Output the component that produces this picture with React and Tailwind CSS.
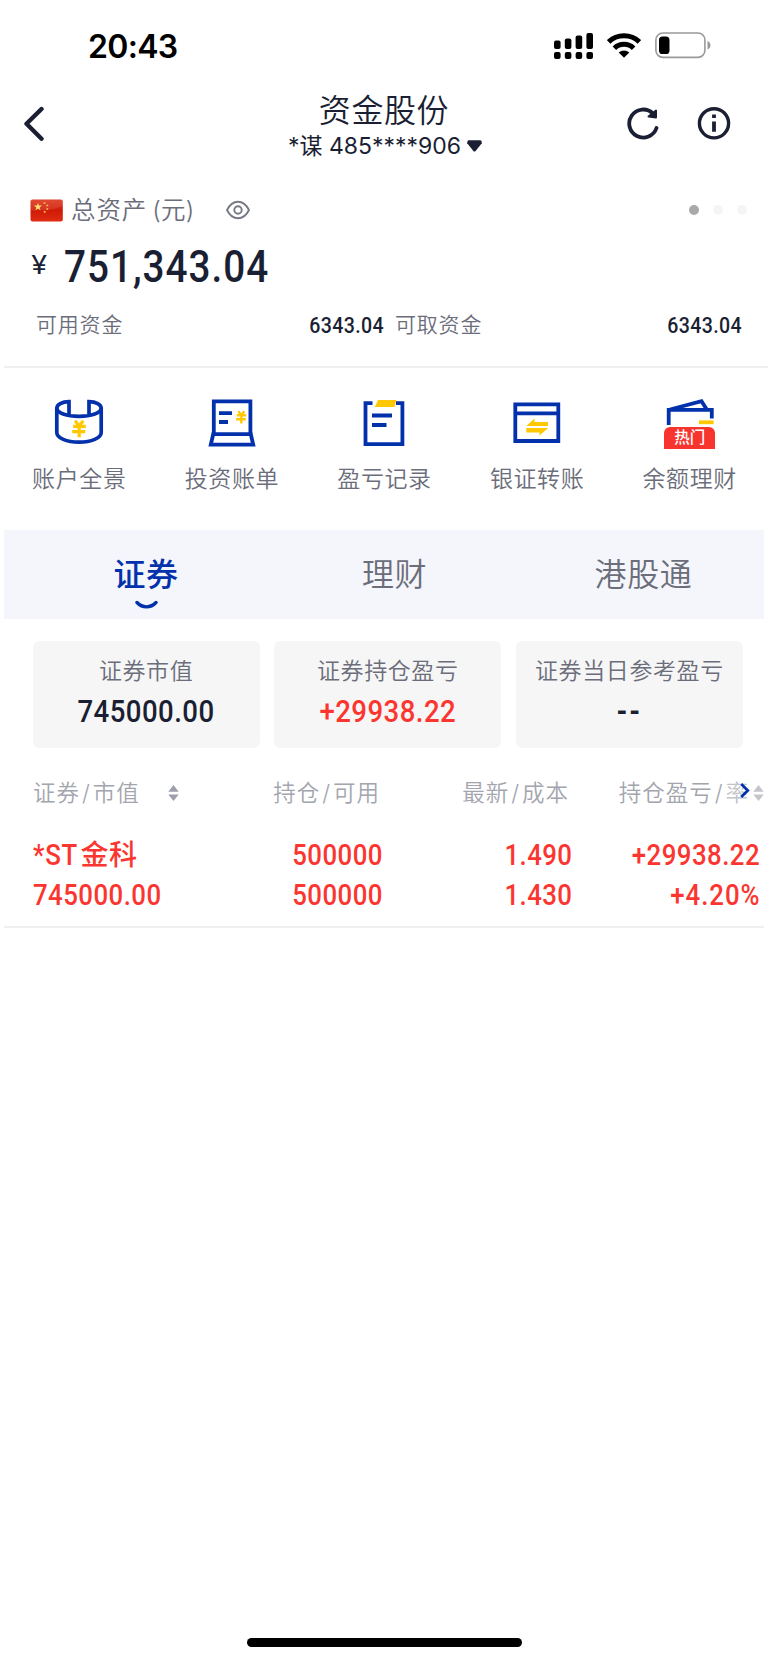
import React from 'react';

const BLUE = '#0331ac';
const YELLOW = '#ffc803';
const INK = '#1b1f33';

const YuanMark = ({ x, y, scale = 1 }) => (
    <g transform={`translate(${x} ${y}) scale(${scale})`} stroke={YELLOW} strokeWidth="3.2" fill="none">
        <path d="M3.2 .2L7 5.6L11.3 .2M1.2 5.8H13.8M.2 11.2H13.2M7.2 5V16.8" />
    </g>
);

const PanoramaIcon = () => (
    <svg width="50" height="50" viewBox="0 0 50 50" fill="none" stroke={BLUE} strokeWidth="3.7">
        <path d="M15 16.3V3.6C8 3.6 2.8 6.5 2.8 10.3C2.8 14.8 12.5 18.3 25 18.3C37.5 18.3 47.2 14.8 47.2 10.3C47.2 6.5 42 3.6 35 3.6V16.3" />
        <path d="M2.8 10V34.5C2.8 40 12.5 44.2 25 44.2C37.5 44.2 47.2 40 47.2 34.5V10" />
        <YuanMark x={18} y={22.5} />
    </svg>
);

const BillIcon = () => (
    <svg width="50" height="50" viewBox="0 0 50 50" fill="none" stroke={BLUE} strokeWidth="3.8">
        <path d="M6.8 36V3.4H43.4V36" />
        <path d="M6.2 36.2H43.8L46.2 46.6H3.8Z" />
        <path d="M12 15.2H25M12 24H21" />
        <YuanMark x={29} y={13} scale={0.74} />
    </svg>
);

const RecordIcon = () => (
    <svg width="50" height="50" viewBox="0 0 50 50" fill="none" stroke={BLUE} strokeWidth="3.8">
        <path d="M13.5 5.2H6.5V46.2H43.4V5.2H37" />
        <path d="M13 17.5H33M13 27H27.5" />
        <path d="M19 2H37.5L35.3 9H15.8Z" fill={YELLOW} stroke="none" />
    </svg>
);

const TransferIcon = () => (
    <svg width="50" height="50" viewBox="0 0 50 50" fill="none" stroke={BLUE} strokeWidth="3.8">
        <path d="M3.3 6.3H46.3V43H3.3ZM3.3 15.3H46.3" />
        <path d="M14.3 28L22.5 20.5V24H36V28ZM14.3 30H36.3L27.5 37.5V34.5H14.3Z" fill={YELLOW} stroke="none" />
    </svg>
);

const WalletIcon = () => (
    <svg width="50" height="50" viewBox="0 0 50 50" fill="none" stroke={BLUE} strokeWidth="3.8">
        <path d="M3.7 27V11.9H46.8V20.5" />
        <path d="M5 11.5L36.5 3.2L41.8 11.5" />
        <path d="M34 24.3H48.6" stroke={YELLOW} />
    </svg>
);

const SortIcon = ({ className = '' }) => (
    <svg className={className} width="11" height="16" viewBox="0 0 11 16" fill="#9d9faa">
        <path d="M5.5 0L10.7 6.7H.3ZM5.5 16L10.7 9.6H.3Z" />
    </svg>
);

const shortcuts = [
    { label: '账户全景', Icon: PanoramaIcon },
    { label: '投资账单', Icon: BillIcon },
    { label: '盈亏记录', Icon: RecordIcon },
    { label: '银证转账', Icon: TransferIcon },
    { label: '余额理财', Icon: WalletIcon, badge: '热门' },
];

const summary = [
    { label: '证券市值', value: '745000.00', color: 'text-[#1b1f33]' },
    { label: '证券持仓盈亏', value: '+29938.22', color: 'text-[#fb3630]' },
    { label: '证券当日参考盈亏', value: <span className="font-bold tracking-[2px]">--</span>, color: 'text-[#1b1f33]' },
];

// Roboto squeezed a little so that figures keep a narrow look
const Num = ({ children, className = '' }) => (
    <span className={`inline-block font-['Roboto'] font-medium whitespace-nowrap scale-x-[0.89] ${className}`}>{children}</span>
);

const StatusBar = () => (
    <div className="flex h-[90px] items-start justify-between pl-[88px] pr-14 text-black">
        <span className="mt-[27px] font-['Inter'] text-[32px] leading-10 font-semibold tracking-[-0.7px]">20:43</span>
        <div className="mt-[33px] flex">
            <svg width="39" height="28" viewBox="0 0 39 28" fill="#000">
                <rect x="0" y="7.5" width="6.6" height="8.5" rx="2" />
                <rect x="10.8" y="5.5" width="6.6" height="10.5" rx="2" />
                <rect x="21.6" y="2.5" width="6.6" height="13.5" rx="2" />
                <rect x="32.4" y="0" width="6.6" height="16" rx="2" />
                <rect x="0" y="19" width="6.6" height="7" rx="2" />
                <rect x="10.8" y="19" width="6.6" height="7" rx="2" />
                <rect x="21.6" y="19" width="6.6" height="7" rx="2" />
                <rect x="32.4" y="19" width="6.6" height="7" rx="2" />
            </svg>
            <svg className="ml-3.5" width="34" height="26" viewBox="0 0 34 26" fill="none" stroke="#000" strokeWidth="5">
                <path d="M1.6 9C10 .8 24 .8 32.4 9" />
                <path d="M7.4 15.2C12.6 10 21.4 10 26.6 15.2" />
                <path d="M17 24.8L11.7 19.6C14.7 16.7 19.3 16.7 22.3 19.6Z" fill="#000" stroke="none" />
            </svg>
            <svg className="-mt-px ml-3.5" width="57" height="27" viewBox="0 0 57 27" fill="none">
                <rect x=".9" y="1" width="49" height="24.4" rx="7" stroke="#999" strokeWidth="1.6" />
                <rect x="4" y="4.5" width="10.5" height="17.5" rx="3.6" fill="#000" />
                <path d="M52.5 9C56.5 10.5 56.5 16 52.5 17.5Z" fill="#999" />
            </svg>
        </div>
    </div>
);

const Header = () => (
    <div className="flex h-[90px] items-start justify-between pl-6 pr-[37px] text-[#1b1f33]">
        <svg className="mt-4" width="22" height="36" viewBox="0 0 22 36" fill="none" stroke={INK} strokeWidth="4.4" strokeLinecap="round" strokeLinejoin="round">
            <path d="M17.5 3L2.5 17.8L17.5 32.7" />
        </svg>
        <div className="ml-[97px] flex flex-col items-center pt-0.5">
            <h1 className="-ml-0.5 h-[37px] text-[32px] leading-[38px] font-[350] tracking-[0.6px]">资金股份</h1>
            <div className="flex h-8 items-center pt-0.5 text-[23px] leading-8 font-[380]">
                <span>*谋 485****906</span>
                <svg className="ml-1.5" width="15" height="12" viewBox="0 0 15 12" fill={INK}>
                    <path d="M1.5 .3H13.5Q15 .6 14.8 3.2L8.6 11Q7.5 12 6.4 11L.2 3.2Q0 .6 1.5 .3Z" />
                </svg>
            </div>
        </div>
        <div className="mt-4 flex gap-[38px]">
            <svg width="32" height="34" viewBox="0 0 32 34" fill="none" stroke={INK} strokeWidth="3.8" strokeLinecap="round">
                <path d="M29.5 22A14 14 0 1 1 26 7.5" />
                <path d="M29 4.5V11.5L21.5 10.5Z" fill={INK} strokeWidth="2" strokeLinejoin="round" />
            </svg>
            <svg width="34" height="34" viewBox="0 0 34 34" fill="none" stroke={INK} strokeWidth="3.4">
                <circle cx="17" cy="17.3" r="14.6" />
                <path d="M17 8.5V12M17 15.5V25.8" strokeWidth="3.8" />
            </svg>
        </div>
    </div>
);

const Assets = () => (
    <section className="h-[186px] pl-[30px] pr-[26px] text-[#1b1f33]">
        <div className="flex h-[60px] items-center">
            <svg width="33" height="23" viewBox="0 0 33 23">
                <defs>
                    <linearGradient id="flag" x1="0" y1="0" x2="0" y2="1">
                        <stop offset="0" stopColor="#dc351b" />
                        <stop offset=".5" stopColor="#cf1b08" />
                        <stop offset="1" stopColor="#df2c12" />
                    </linearGradient>
                </defs>
                <rect x=".5" y=".5" width="32.3" height="22" rx="2" fill="url(#flag)" />
                <path d="M.5 11.5C12 11.5 25 11 32.8 7V2.5Q32.8.5 30.8.5H2.5Q.5.5.5 2.5Z" fill="#fff" opacity=".1" />
                <path d="M8 3.8L9 6.6H12L9.6 8.4L10.5 11.2L8 9.5L5.5 11.2L6.4 8.4L4 6.6H7Z" fill="#ffe070" />
                <g fill="#f5b04a">
                    <circle cx="14.5" cy="4" r="1.1" />
                    <circle cx="17.3" cy="6.5" r="1.1" />
                    <circle cx="17.3" cy="10" r="1.1" />
                    <circle cx="14.7" cy="12.8" r="1.1" />
                </g>
            </svg>
            <span className="ml-2 text-[24.5px] font-[350] tracking-[0.9px] text-[#6b6d7a]">总资产<span className="ml-[5px] tracking-[0.2px]">(元)</span></span>
            <svg className="ml-8" width="24" height="20" viewBox="0 0 24 20" fill="none" stroke="#777985" strokeWidth="1.9">
                <path d="M1 10C4 4 8 1.7 12 1.7S20 4 23 10C20 16 16 18.3 12 18.3S4 16 1 10Z" />
                <circle cx="12" cy="10" r="3.7" />
            </svg>
            <div className="-mr-[5px] ml-auto flex items-center gap-3.5">
                <i className="size-2.5 rounded-full bg-[#a9a9a9]" />
                <i className="size-2.5 rounded-full bg-[#f5f5f5]" />
                <i className="size-2.5 rounded-full bg-[#f5f5f5]" />
            </div>
        </div>
        <div className="flex h-[51px] items-center pt-1">
            <span className="-mt-1 w-[34px] origin-left scale-x-115 pl-px font-['Inter'] text-[25px]">¥</span>
            <Num className="origin-left text-[43.5px] leading-[51px] tracking-[1.1px]">751,343.04</Num>
        </div>
        <div className="flex h-[68px] items-center text-[21px] font-[350] text-[#6b6d7a]">
            <div className="flex w-[354px] items-center justify-between pl-1.5">
                <span className="tracking-[0.8px]">可用资金</span>
                <Num className="origin-right text-[22px] tracking-[0.4px] text-[#1b1f33]">6343.04</Num>
            </div>
            <div className="flex flex-1 items-center justify-between pl-[11px]">
                <span className="tracking-[0.8px]">可取资金</span>
                <Num className="origin-right text-[22px] tracking-[0.4px] text-[#1b1f33]">6343.04</Num>
            </div>
        </div>
    </section>
);

const Shortcuts = () => (
    <nav className="ml-1 flex h-[164px] border-t-2 border-[#efefef] pr-px pt-[30px]">
        {shortcuts.map(({ label, Icon, badge }) => (
            <div key={label} className="relative -left-px flex flex-1 flex-col items-center">
                <Icon />
                {badge && (
                    <span className="absolute top-[28.5px] flex h-[22px] w-[51px] items-center justify-center rounded-t-md bg-[#f8342f] text-[15.5px] font-medium text-white">{badge}</span>
                )}
                <span className="mt-3.5 text-[23px] leading-[34px] font-[350] tracking-[0.6px] text-[#6b6d7a]">{label}</span>
            </div>
        ))}
    </nav>
);

const Tabs = () => (
    <div className="mx-1 flex h-[89px] bg-[#f4f6fb] pl-[18px] text-[32px] leading-[89px] font-[350] tracking-[0.6px] text-[#6b6d7a]">
        <div className="relative w-[248px] text-center font-medium text-[#0331ac]">
            证券
            <svg className="absolute top-[70px] left-[113px]" width="23" height="10" viewBox="0 0 23 10" fill="none" stroke={BLUE} strokeWidth="3.4" strokeLinecap="round">
                <path d="M2 2.5C7.5 8.3 15.5 8.3 21 2.5" />
            </svg>
        </div>
        <div className="w-[249px] text-center">理财</div>
        <div className="flex-1 pl-1 text-center">港股通</div>
    </div>
);

const Summary = () => (
    <div className="mt-[22px] flex gap-[14.5px] pl-[32.5px] pr-[25px]">
        {summary.map((item) => (
            <div key={item.label} className="flex h-[107px] flex-1 flex-col items-center rounded-md bg-[#f6f6f6] pt-[13px]">
                <span className="text-[23px] leading-[34px] font-[350] tracking-[0.6px] whitespace-nowrap text-[#6b6d7a]">{item.label}</span>
                <Num className={`mt-1 text-[31px] leading-10 tracking-[0.5px] ${item.color}`}>{item.value}</Num>
            </div>
        ))}
    </div>
);

const Holdings = () => (
    <div className="mx-1 mt-[25px] h-[155px] border-b-2 border-[#efefef]">
        <div className="flex h-10 items-center text-[22.5px] font-[350] tracking-[1px] text-[#a3a5ae]">
            <div className="flex w-[180px] items-center pl-[29px]">
                证券<span className="px-0.5">/</span>市值
                <SortIcon className="ml-7 shrink-0" />
            </div>
            <div className="w-[196px] text-right">持仓<span className="px-0.5">/</span>可用</div>
            <div className="w-[189px] text-right">最新<span className="px-0.5">/</span>成本</div>
            <div className="relative flex flex-1 items-center justify-end">
                <span className="whitespace-nowrap">持仓盈亏<span className="px-0.5">/</span>率</span>
                <SortIcon className="ml-1 shrink-0 opacity-60" />
                <div className="absolute top-0 right-3 flex h-8 w-[27px] items-center justify-end bg-white/35 pb-1 pr-0.5">
                    <svg width="10" height="15" viewBox="0 0 10 15" fill="none" stroke={BLUE} strokeWidth="2.7">
                        <path d="M1.2 1L7.8 7.5L1.2 14" />
                    </svg>
                </div>
            </div>
        </div>
        <div className="mt-[22px] flex text-[29px] leading-[40px] tracking-[0.5px] text-[#fb3630]">
            <div className="flex w-[190px] flex-col items-start pl-[29px]">
                <div className="flex h-10 items-center whitespace-nowrap">
                    <Num className="-mr-[3px] origin-left tracking-[0.8px]">*ST</Num>
                    <span className="text-[28px] font-medium tracking-[0.5px]">金科</span>
                </div>
                <Num className="origin-left">745000.00</Num>
            </div>
            <div className="flex w-[189px] flex-col items-end">
                <Num className="origin-right">500000</Num>
                <Num className="origin-right">500000</Num>
            </div>
            <div className="flex w-[189px] flex-col items-end">
                <Num className="origin-right">1.490</Num>
                <Num className="origin-right">1.430</Num>
            </div>
            <div className="flex flex-1 flex-col items-end pr-[3.5px]">
                <Num className="origin-right">+29938.22</Num>
                <Num className="origin-right tracking-[1.1px]">+4.20%</Num>
            </div>
        </div>
    </div>
);

const App = () => {
    return (
        <div className="flex h-[1662px] w-[768px] flex-col overflow-hidden bg-white font-['Inter','Noto_Sans_CJK_SC',sans-serif]">
            <StatusBar />
            <Header />
            <Assets />
            <Shortcuts />
            <Tabs />
            <Summary />
            <Holdings />
            <div className="mx-auto mt-auto mb-[15px] h-[9px] w-[275px] shrink-0 rounded-full bg-black" />
        </div>
    );
};

export default App;
